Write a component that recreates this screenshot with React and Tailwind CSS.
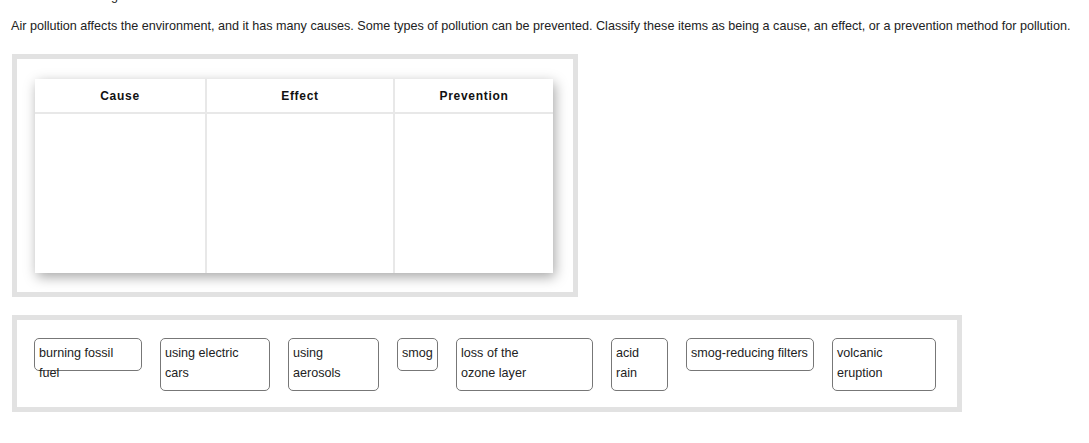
import React from 'react';

// lines are pre-broken the way the reference wraps them
const items = [
  { lines: ['burning fossil', 'fuel'], w: 'w-[108px]', fixed: true },
  { lines: ['using electric', 'cars'], w: 'w-[110px]' },
  { lines: ['using', 'aerosols'], w: 'w-[91px]' },
  { lines: ['smog'], w: 'w-[41px]' },
  { lines: ['loss of the', 'ozone layer'], w: 'w-[137px]' },
  { lines: ['acid', 'rain'], w: 'w-[57px]' },
  { lines: ['smog-reducing filters'], w: 'w-[128px]' },
  { lines: ['volcanic', 'eruption'], w: 'w-[104px]' },
];

const columns = [
  { title: 'Cause', w: 'w-[170px]' },
  { title: 'Effect', w: 'w-[188px]' },
  { title: 'Prevention', w: 'flex-1' },
];

const App = () => {
  return (
    <div className="min-h-screen bg-white pl-[11px] text-[12.6px] text-[#222] font-['Liberation_Sans',Arial,sans-serif] overflow-hidden">
      <p className="-mt-[13px] leading-[18px] whitespace-nowrap">
        <span className="font-bold">Instructions:</span> Drag each item to the correct location on the chart.
      </p>
      <p className="mt-[12px] leading-[18px] whitespace-nowrap">
        Air pollution affects the environment, and it has many causes. Some types of pollution can be prevented. Classify these items as being a cause, an effect, or a prevention method for pollution.
      </p>

      {/* chart */}
      <div className="mt-[19px] ml-px w-[566px] border-[5px] border-[#e2e2e2] px-[18px] pt-[20px] pb-[19px]">
        <div className="flex w-[518px] h-[194px] bg-white shadow-[2px_4px_12px_rgba(0,0,0,0.35)]">
          {columns.map((c, i) => (
            <div key={c.title} className={`${c.w} flex flex-col ${i > 0 ? 'border-l-2 border-[#e8e8e8]' : ''}`}>
              <div className="h-[35px] flex items-center justify-center border-b-2 border-[#e8e8e8] text-[12px] font-bold tracking-[0.7px] text-[#111]">
                {c.title}
              </div>
              <div className="flex-1" />
            </div>
          ))}
        </div>
      </div>

      {/* item bank */}
      <div className="mt-[18px] ml-px w-[950px] border-[5px] border-[#e2e2e2] pl-[17px] pt-[18px] pb-[16px]">
        <div className="flex items-start gap-[18px]">
          {items.map((it) => (
            <div
              key={it.lines.join(' ')}
              className={`${it.w} ${it.fixed ? 'h-[33px]' : ''} shrink-0 border border-[#777] rounded-[5px] bg-white px-[4px] pt-[4px] pb-[7px] leading-[20px] whitespace-nowrap`}
            >
              {it.lines.map((l) => (
                <div key={l}>{l}</div>
              ))}
            </div>
          ))}
        </div>
      </div>
    </div>
  );
};

export default App;
